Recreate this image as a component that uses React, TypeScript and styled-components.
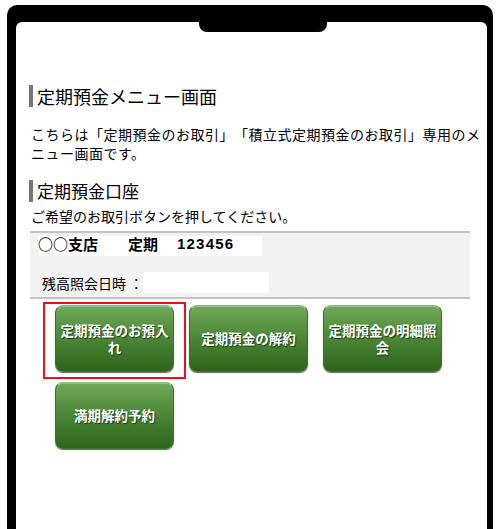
import React from "react";
import styled, { createGlobalStyle } from "styled-components";

const GlobalStyle = createGlobalStyle`
  html, body {
    margin: 0;
    padding: 0;
    background: #fff;
  }
  body {
    font-family: "Noto Sans CJK JP", "Noto Sans", sans-serif;
    color: #000;
    text-spacing-trim: space-all;
  }
`;

const PhoneFrame = styled.div`
  margin: 5px 0 0 7px;
  width: 486px;
  height: 524px;
  box-sizing: border-box;
  padding: 17px 6px 0 9px;
  background: #000;
  border-radius: 10px 10px 0 0;
`;

const Screen = styled.div`
  position: relative;
  height: 100%;
  background: #fff;
  border-radius: 6px 6px 0 0;
  padding: 63px 4px 0 13px;
  box-sizing: border-box;
`;

const Notch = styled.div`
  position: absolute;
  top: 0;
  left: 183px;
  width: 128px;
  height: 10px;
  background: #000;
  border-radius: 0 0 8px 8px;
`;

const Heading = styled.h2<{ $size: number }>`
  margin: 0;
  border-left: 4px solid #777;
  padding-left: 4px;
  font-size: ${(p) => p.$size}px;
  font-weight: normal;
  line-height: 22px;
`;

const Text = styled.p`
  margin: 0;
  padding-left: 2px;
  font-size: 14px;
  line-height: 19px;
`;

const Intro = styled(Text)`
  margin: 18px 0 17px;
  width: 452px;
  letter-spacing: 0.5px;
`;

const Instruction = styled(Text)`
  margin: 5px 0 5px;
`;

const AccountBox = styled.div`
  margin-left: 1px;
  width: 440px;
  background: #f2f2f2;
  border-top: 2px solid #c4c4c4;
  border-bottom: 2px solid #c4c4c4;
  padding: 3px 0 4px 8px;
  box-sizing: border-box;
`;

const AccountName = styled.div`
  width: 224px;
  height: 20px;
  background: #fff;
  font-weight: bold;
  font-size: 15px;
  line-height: 16px;
  display: flex;
`;

const Cell = styled.span<{ $w: number; $latin?: boolean }>`
  display: inline-block;
  width: ${(p) => p.$w}px;
  font-family: ${(p) =>
    p.$latin ? `"Liberation Sans", sans-serif` : `"Noto Sans CJK JP", sans-serif`};
  letter-spacing: ${(p) => (p.$latin ? "1.2px" : "0")};
`;

const BalanceRow = styled.div`
  margin-top: 16px;
  display: flex;
  align-items: center;
  font-size: 14px;
  padding-left: 4px;
`;

const BlankField = styled.div`
  width: 126px;
  height: 21px;
  background: #fff;
`;

const ButtonGrid = styled.div`
  display: grid;
  grid-template-columns: repeat(3, 119px);
  column-gap: 15px;
  row-gap: 10px;
  padding: 6px 0 0 26px;
`;

const FocusWrap = styled.div<{ $focused?: boolean }>`
  position: relative;
  &::before {
    content: "";
    display: ${(p) => (p.$focused ? "block" : "none")};
    position: absolute;
    left: -12px;
    right: -12px;
    top: -3px;
    bottom: -7px;
    border: 2px solid #e8111b;
    pointer-events: none;
  }
`;

const MenuButton = styled.button`
  width: 119px;
  height: 67px;
  padding: 0 2px;
  border: 1px solid #3c6e2c;
  border-top-color: #8fbf7c;
  border-radius: 8px;
  background: linear-gradient(to bottom, #6faa59 0%, #4e8a39 45%, #2c6419 100%);
  box-shadow: 0 1px 1px rgba(0, 0, 0, 0.6), inset 0 1px 0 rgba(255, 255, 255, 0.25);
  color: #fff;
  font-family: "Noto Sans CJK JP", sans-serif;
  font-size: 13.5px;
  font-weight: bold;
  line-height: 17px;
  text-shadow: 1px 1px 1px #1c3a12;
  cursor: pointer;
  word-break: break-all;
`;

const buttons = [
  { label: "定期預金のお預入れ", focused: true },
  { label: "定期預金の解約" },
  { label: "定期預金の明細照会" },
  { label: "満期解約予約" },
];

const App: React.FC = () => {
  return (
    <>
      <GlobalStyle />
      <PhoneFrame>
        <Screen>
          <Notch />
          <Heading $size={18}>定期預金メニュー画面</Heading>
          <Intro>
            こちらは「定期預金のお取引」「積立式定期預金のお取引」専用のメニュー画面です。
          </Intro>
          <Heading $size={17}>定期預金口座</Heading>
          <Instruction>ご希望のお取引ボタンを押してください。</Instruction>
          <AccountBox>
            <AccountName>
              <Cell $w={90}>○○支店</Cell>
              <Cell $w={49}>定期</Cell>
              <Cell $w={70} $latin>
                123456
              </Cell>
            </AccountName>
            <BalanceRow>
              <span>残高照会日時 ：</span>
              <BlankField />
            </BalanceRow>
          </AccountBox>
          <ButtonGrid>
            {buttons.map((b) => (
              <FocusWrap key={b.label} $focused={b.focused}>
                <MenuButton type="button">{b.label}</MenuButton>
              </FocusWrap>
            ))}
          </ButtonGrid>
        </Screen>
      </PhoneFrame>
    </>
  );
};

export default App;
